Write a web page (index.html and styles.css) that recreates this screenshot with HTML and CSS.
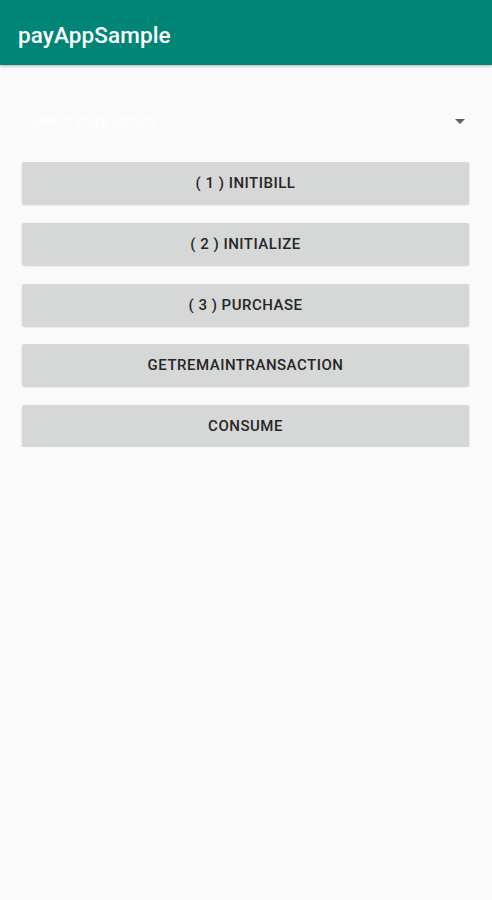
FILE: index.html
```html
<!DOCTYPE html>
<html>
<head>
<meta charset="utf-8">
<link rel="stylesheet" href="styles.css">
</head>
<body>
<header class="appbar"><span class="title">payAppSample</span></header>
<main class="content">
  <div class="spinner">
    <span class="spinner-text">Select store option</span>
    <svg class="arrow" width="10" height="5" viewBox="0 0 10 5"><path d="M0 0H10L5 5Z" fill="#5f5f5f"/></svg>
  </div>
  <div class="buttons">
    <button class="btn">( 1 ) INITIBILL</button>
    <button class="btn">( 2 ) INITIALIZE</button>
    <button class="btn">( 3 ) PURCHASE</button>
    <button class="btn">GETREMAINTRANSACTION</button>
    <button class="btn">CONSUME</button>
  </div>
</main>
</body>
</html>
```
FILE: styles.css
```css
html, body {
  margin: 0;
  padding: 0;
  background: #fafafa;
  font-family: Roboto, "Noto Sans", sans-serif;
}
.appbar {
  height: 65px;
  background: #008577;
  display: flex;
  align-items: center;
  padding-left: 18px;
  padding-top: 4px;
  box-sizing: border-box;
  box-shadow: 0 1px 3px rgba(0,0,0,0.3);
  position: relative;
}
.title {
  color: #ffffff;
  font-size: 22.5px;
  font-weight: 500;
  letter-spacing: 0.1px;
}
.content {
  padding: 32px 23px 0 22px;
}
.spinner {
  height: 48px;
  display: flex;
  align-items: center;
  justify-content: space-between;
  padding-left: 8px;
  padding-right: 4px;
}
.spinner-text {
  color: #ffffff;
  font-size: 15px;
}
.arrow {
  display: block;
}
.buttons {
  margin-top: 17px;
  display: flex;
  flex-direction: column;
  gap: 18.75px;
}
.btn {
  height: 42px;
  width: 100%;
  border: none;
  border-radius: 2px;
  background: #d6d7d7;
  box-shadow: 0 1px 2px rgba(0,0,0,0.18);
  color: #262626;
  font-family: Roboto, "Noto Sans", sans-serif;
  font-size: 15px;
  font-weight: 500;
  letter-spacing: 0.5px;
  padding: 0;
}
```
